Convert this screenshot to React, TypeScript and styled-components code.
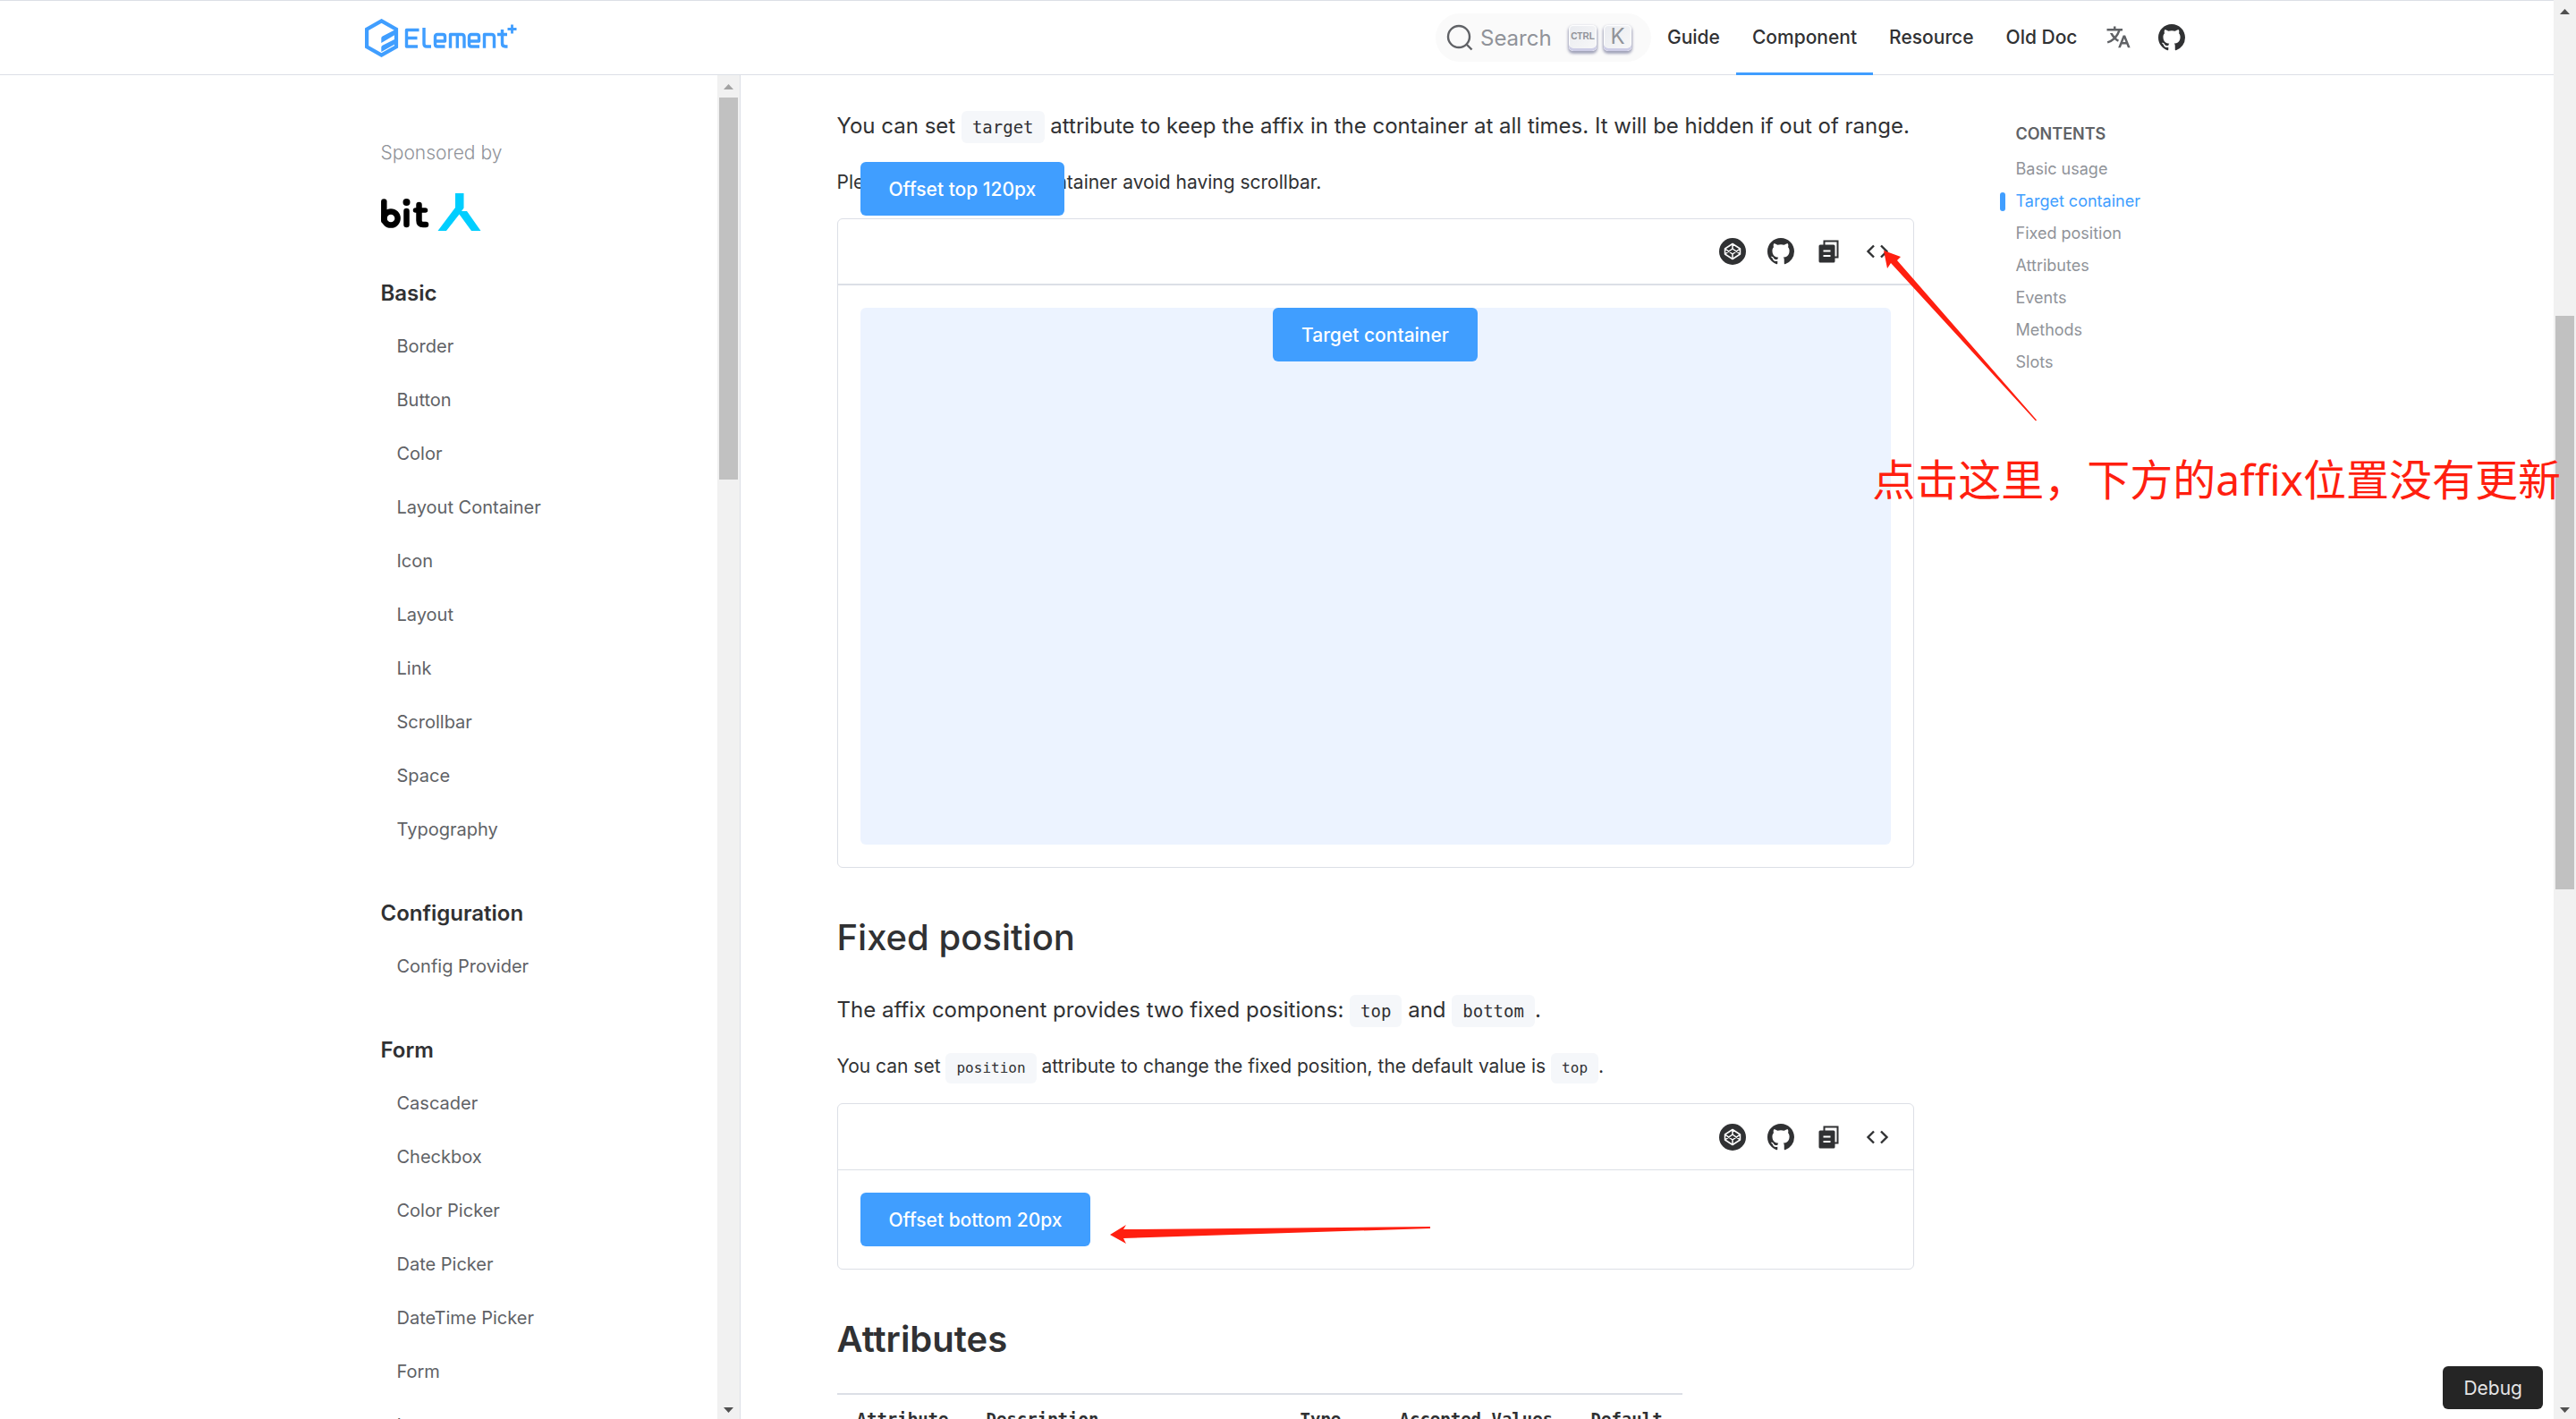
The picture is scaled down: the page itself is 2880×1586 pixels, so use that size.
import React from 'react';
import styled, { createGlobalStyle, css } from 'styled-components';

const sans = `Inter, "Noto Sans CJK SC", sans-serif`;
const mono = `"DejaVu Sans Mono", "Liberation Mono", monospace`;
const line = '#dcdfe6';
const brand = '#409eff';
const ink = '#303133';

const GlobalStyle = createGlobalStyle`
  * { box-sizing: border-box; }
  body { margin: 0; background: #fff; color: ${ink}; font-family: ${sans}; font-size: 21px; }
  a { color: inherit; text-decoration: none; }
  h2, h3, p, ul { margin: 0; padding: 0; font-weight: inherit; }
  ul { list-style: none; }
  button { font-family: inherit; border: 0; cursor: pointer; }
  svg { display: block; }
`;

const Window = styled.div`
  display: flex;
  height: 100vh;
  overflow: hidden;
  position: relative;
`;

const Page = styled.div`
  flex: 1;
  min-width: 0;
  display: flex;
  flex-direction: column;
`;

const Header = styled.header`
  flex: none;
  height: 84px;
  padding: 0 calc((100% - 2040px) / 2);
  border-top: 1px solid ${line};
  border-bottom: 1px solid ${line};
  display: flex;
  align-items: center;
  justify-content: space-between;
`;

const Nav = styled.nav`
  display: flex;
  align-items: center;
  align-self: stretch;
`;

const SearchButton = styled.button`
  height: 54px;
  width: 241px;
  padding: 0 22px 0 12px;
  border-radius: 27px;
  background: #fafafa;
  color: #909399;
  font-size: 24px;
  display: flex;
  align-items: center;
  gap: 8px;
`;

const SearchLabel = styled.span`
  flex: 1;
  text-align: left;
`;

const Key = styled.kbd<{ $small?: boolean }>`
  width: 31px;
  height: 29px;
  padding-bottom: 3px;
  border-radius: 5px;
  background: linear-gradient(-225deg, #e9ebf0, #f8f8f8);
  box-shadow: inset 0 -3px 0 0 #cdcde6, inset 0 0 1px 1px #fff, 0 2px 3px 1px rgba(30, 35, 90, 0.4);
  font-family: ${p => (p.$small ? `"Liberation Sans Narrow", "Liberation Sans", sans-serif` : sans)};
  font-size: ${p => (p.$small ? 10 : 24)}px;
  font-weight: ${p => (p.$small ? 700 : 400)};
  line-height: 26px;
  display: flex;
  align-items: center;
  justify-content: center;
`;

const NavLink = styled.a<{ $active?: boolean }>`
  align-self: stretch;
  margin-bottom: -1px;
  padding: 0 18px;
  display: flex;
  align-items: center;
  font-size: 21px;
  font-weight: 500;
  border-bottom: 3px solid ${p => (p.$active ? brand : 'transparent')};
`;

const IconGroup = styled.div`
  display: flex;
  align-items: center;
  gap: 30px;
  padding: 0 5px 0 12px;
`;

const NavIcon = styled.a`
  display: flex;
  color: ${ink};
`;

const Body = styled.div`
  flex: 1;
  min-height: 0;
  display: flex;
`;

const Sidebar = styled.aside`
  flex: none;
  width: calc((100% - 2040px) / 2 + 420px);
  border-right: 1px solid ${line};
  display: flex;
`;

const SideScroll = styled.div`
  flex: 1;
  overflow: hidden;
  padding: 69px 0 0 calc(100% - 401px);
`;

const Sponsor = styled.p`
  font-weight: 300;
  font-size: 21px;
  line-height: 36px;
  color: #909399;
`;

const SponsorLink = styled.a`
  display: flex;
  padding: 27px 0 40px;
`;

const Group = styled.section`
  margin-bottom: 35px;
`;

const GroupTitle = styled.h3`
  font-size: 24px;
  line-height: 58px;
  font-weight: 600;
`;

const SideLink = styled.a`
  display: block;
  padding-left: 18px;
  font-size: 20px;
  line-height: 60px;
  color: #606266;
`;

const Main = styled.main`
  flex: 1;
  min-width: 0;
  padding: 36px 0 0 108px;
  display: flex;
  align-items: flex-start;
  gap: 96px;
  overflow: hidden;
`;

const Article = styled.article`
  width: 1204px;
`;

const Lead = styled.p`
  font-size: 24px;
  line-height: 42px;
`;

const Note = styled.p`
  margin: 24px 0 22px;
  font-size: 21px;
  line-height: 36px;
`;

const Code = styled.code<{ $small?: boolean }>`
  display: inline-block;
  padding: 0 12px;
  border-radius: 6px;
  background: #f5f7fa;
  font-family: ${mono};
  font-size: ${p => (p.$small ? 16 : 19)}px;
  line-height: ${p => (p.$small ? 34 : 36)}px;
`;

const Title = styled.h2<{ $strong?: boolean }>`
  font-size: 40px;
  line-height: 60px;
  font-weight: ${p => (p.$strong ? 600 : 500)};
  margin: 48px 0 30px;
`;

const Card = styled.section`
  position: relative;
  border: 1px solid ${line};
  border-radius: 6px;
`;

const Toolbar = styled.div<{ $rule: number }>`
  height: 74px;
  padding: 0 25px;
  border-bottom: ${p => p.$rule}px solid ${line};
  display: flex;
  align-items: center;
  justify-content: flex-end;
  gap: 24px;
`;

const ToolButton = styled.button`
  padding: 0;
  background: none;
  color: ${ink};
`;

const Demo = styled.div`
  padding: 25px;
`;

const Stage = styled.div`
  height: 600px;
  border-radius: 6px;
  background: #ecf3ff;
  display: flex;
  justify-content: center;
  align-items: flex-start;
`;

const Primary = styled.button`
  height: 60px;
  padding: 0 32px;
  border-radius: 6px;
  background: ${brand};
  color: #fff;
  font-size: 21px;
  font-weight: 500;
`;

const Affixed = styled.div`
  position: absolute;
  left: 25px;
  top: -64px;
`;

const Table = styled.table`
  margin-top: 2px;
  border-collapse: collapse;
  border-top: 2px solid ${line};
  font-family: ${mono};
`;

const Th = styled.th<{ $w: number }>`
  width: ${p => p.$w}px;
  padding: 12px 0 12px 22px;
  text-align: left;
  font-size: 19px;
  line-height: 30px;
  white-space: nowrap;
`;

const Toc = styled.nav`
  padding-top: 12px;
`;

const TocTitle = styled.h3`
  padding-left: 18px;
  font-size: 18px;
  line-height: 36px;
  font-weight: 600;
  color: #606266;
  margin-bottom: 3px;
`;

const TocLink = styled.a<{ $active?: boolean }>`
  display: flex;
  align-items: center;
  gap: 12px;
  font-size: 18px;
  line-height: 36px;
  color: #909399;
  &::before {
    content: '';
    width: 6px;
    height: 21px;
    border-radius: 3px;
  }
  ${p => p.$active && css`
    color: ${brand};
    &::before { background: ${brand}; }
  `}
`;

const Track = styled.div`
  flex: none;
  width: 25px;
  background: #f1f1f1;
  display: flex;
  flex-direction: column;
  align-items: center;
  justify-content: space-between;
  padding: 10px 0 7px;
`;

const ThumbLane = styled.div`
  flex: 1;
  padding: 9px 0;
`;

const Thumb = styled.div<{ $from: number; $size: number }>`
  width: 21px;
  margin-top: ${p => p.$from}px;
  height: ${p => p.$size}px;
  background: #c1c1c1;
`;

const Debug = styled.button`
  position: absolute;
  right: 37px;
  bottom: 11px;
  height: 48px;
  padding: 0 23px;
  border-radius: 6px;
  background: #252525;
  color: #e5e5e5;
  font-size: 21px;
`;

const Markup = styled.svg<{ $left: number; $top: number }>`
  position: absolute;
  left: ${p => p.$left}px;
  top: ${p => p.$top}px;
  pointer-events: none;
`;

const Callout = styled.p`
  position: absolute;
  right: 17px;
  top: 500px;
  color: #ff1f10;
  font-family: "Noto Sans", "Noto Sans CJK SC", sans-serif;
  font-size: 48px;
  line-height: 72px;
  white-space: nowrap;
`;

const Arrow = ({ up, color }: { up?: boolean; color: string }) => (
  <svg width="11" height="6" viewBox="0 0 11 6"><path fill={color} d={up ? 'M0 6 5.500 0 11 6z' : 'M0 0h11L5.500 6z'} /></svg>
);

const Scrollbar = ({ from, size, idle }: { from: number; size: number; idle?: boolean }) => (
  <Track>
    <Arrow up color={idle ? '#a3a3a3' : '#505050'} />
    <ThumbLane><Thumb $from={from} $size={size} /></ThumbLane>
    <Arrow color="#505050" />
  </Track>
);

const Logo = () => (
  <svg width="171" height="43" viewBox="1 0 171 43" fill="none" stroke={brand}>
    <path strokeWidth="4.200" d="M19.500 2.400 36 11.800v19.400l-16.500 9.400L3.100 31.200V11.800z" />
    <path fill={brand} stroke="none" d="M37 11v5.500L19.300 27v-5.200c0-1 .5-1.800 1.300-2.300zM37 21.500V27L19.300 37v-5c0-1 .5-1.800 1.300-2.300z" />
    <g strokeWidth="3.400" strokeLinejoin="round">
      <path d="M61.500 12.500H47.500V31H60M47.500 21.500H59.500" />
      <path d="M67 10v18q0 3 3 3h5" />
      <path d="M90.500 31H82q-2.500 0-2.500-2.500V20q0-2.500 2.500-2.500h6q2.500 0 2.500 2.500v5H80" />
      <path d="M96.500 32.700V17.500H109q3 0 3 3v12.200M104.300 17.500v15.200" />
      <path d="M129 31h-9q-2.500 0-2.500-2.500V20q0-2.500 2.500-2.500h6q2.500 0 2.500 2.500v5H118" />
      <path d="M134.500 32.700V17.500h8q3 0 3 3v12.200" />
      <path d="M154.500 12v15.500q0 3.500 3.500 3.500h2.500M149 17.500h11" />
      <path strokeWidth="2.800" d="M165.500 6.500v10M160.500 11.500h10" />
    </g>
  </svg>
);

const BitLogo = () => (
  <svg width="112" height="43" viewBox="0 0 112 43" fill="none" stroke="#000" strokeWidth="6.500" strokeLinecap="round">
    <path d="M3.300 9.500v21" />
    <circle cx="11" cy="28" r="7.600" />
    <path d="M28.500 20v15" />
    <circle cx="28.500" cy="10" r="4" fill="#000" stroke="none" />
    <path d="M42.500 13v17.500q0 4.500 4.500 4.500h3" />
    <path strokeWidth="5.500" d="M38.500 19h11" />
    <path fill="#00ceff" stroke="none" d="M83 0h9.500v16.500L90 20h6l15.500 22H101L87.500 23.500 73 42H63.500L83 16z" />
  </svg>
);

const GithubIcon = ({ size = 30 }: { size?: number }) => (
  <svg width={size} height={size} viewBox="0 0 24 24" fill={ink}>
    <path d="M12 0C5.370 0 0 5.370 0 12c0 5.300 3.440 9.800 8.200 11.390.6.110.82-.26.82-.58v-2.230c-3.340.73-4.030-1.420-4.030-1.420-.55-1.390-1.340-1.760-1.340-1.760-1.090-.74.080-.73.080-.73 1.210.080 1.840 1.240 1.840 1.240 1.070 1.840 2.810 1.300 3.500 1 .1-.780.420-1.310.760-1.610-2.670-.3-5.470-1.330-5.470-5.930 0-1.310.470-2.380 1.240-3.220-.130-.3-.540-1.520.11-3.180 0 0 1.010-.320 3.300 1.230a11.500 11.500 0 0 1 6 0c2.290-1.550 3.300-1.230 3.300-1.230.65 1.660.240 2.880.120 3.180.770.840 1.230 1.910 1.230 3.220 0 4.610-2.800 5.630-5.480 5.920.430.370.820 1.100.820 2.220v3.290c0 .320.220.700.830.580A12 12 0 0 0 24 12c0-6.630-5.370-12-12-12z" />
  </svg>
);

const TranslateIcon = () => (
  <svg width="30" height="30" viewBox="0 0 24 24" fill="#606266">
    <path d="m18.500 10 4.400 11h-2.155l-1.201-3h-4.090l-1.199 3h-2.154L16.500 10h2zM10 2v2h6v2h-1.968a18.222 18.222 0 0 1-3.620 6.301 14.864 14.864 0 0 0 2.336 1.707l-.751 1.878A17.015 17.015 0 0 1 9 13.725a16.676 16.676 0 0 1-6.201 3.548l-.536-1.929a14.700 14.700 0 0 0 5.327-3.042A18.078 18.078 0 0 1 4.767 8h2.240A16.032 16.032 0 0 0 9 10.877a16.165 16.165 0 0 0 2.910-4.876L2 6V4h6V2h2zm7.500 10.885L16.253 16h2.492L17.500 12.885z" />
  </svg>
);

const SearchIcon = () => (
  <svg width="30" height="30" viewBox="0 0 30 30" fill="none" stroke="#606266" strokeWidth="2.400">
    <circle cx="14" cy="14" r="12" /><path d="m22.500 22.500 6 6" />
  </svg>
);

const SandboxIcon = () => (
  <svg width="30" height="30" viewBox="0 0 30 30" fill="none" stroke="#fff" strokeWidth="1.500" strokeLinejoin="round">
    <circle cx="15" cy="15" r="15" fill={ink} stroke="none" />
    <path d="M15 6.500 23.500 12v6L15 23.500 6.500 18v-6zM15 6.500V12M15 18v5.500M6.500 12l8.500 6 8.500-6M6.500 18l8.500-6 8.500 6" />
  </svg>
);

const CopyIcon = () => (
  <svg width="30" height="30" viewBox="0 0 30 30">
    <path fill="none" stroke={ink} strokeWidth="2" d="M9.500 8V3.500h15v18H20" />
    <rect x="3.500" y="7.500" width="18" height="20" rx="1.500" fill={ink} />
    <path fill="none" stroke="#fff" strokeWidth="2" d="M8.500 14.500h8M8.500 20h8" />
  </svg>
);

const CodeIcon = () => (
  <svg width="30" height="30" viewBox="0 0 30 30" fill="none" stroke={ink} strokeWidth="2.400">
    <path d="m11 8.500-6.500 6.500 6.500 6.500M19 8.500l6.500 6.500-6.500 6.500" />
  </svg>
);

const Tools = ({ rule }: { rule: number }) => (
  <Toolbar $rule={rule}>
    <ToolButton aria-label="Edit in playground"><SandboxIcon /></ToolButton>
    <ToolButton aria-label="Edit on GitHub"><GithubIcon /></ToolButton>
    <ToolButton aria-label="Copy code"><CopyIcon /></ToolButton>
    <ToolButton aria-label="View source"><CodeIcon /></ToolButton>
  </Toolbar>
);

const groups = [
  { title: 'Basic', items: ['Border', 'Button', 'Color', 'Layout Container', 'Icon', 'Layout', 'Link', 'Scrollbar', 'Space', 'Typography'] },
  { title: 'Configuration', items: ['Config Provider'] },
  { title: 'Form', items: ['Cascader', 'Checkbox', 'Color Picker', 'Date Picker', 'DateTime Picker', 'Form', 'Input'] },
];

const contents = ['Basic usage', 'Target container', 'Fixed position', 'Attributes', 'Events', 'Methods', 'Slots'];

const columns = [
  { name: 'Attribute', width: 145 },
  { name: 'Description', width: 351 },
  { name: 'Type', width: 111 },
  { name: 'Accepted Values', width: 214 },
  { name: 'Default', width: 124 },
];

export default function App() {
  return (
    <Window>
      <GlobalStyle />
      <Page>
        <Header>
          <a href="#home" aria-label="Element Plus"><Logo /></a>
          <Nav>
            <SearchButton>
              <SearchIcon />
              <SearchLabel>Search</SearchLabel>
              <Key $small>CTRL</Key>
              <Key>K</Key>
            </SearchButton>
            <NavLink href="#guide">Guide</NavLink>
            <NavLink href="#component" $active>Component</NavLink>
            <NavLink href="#resource">Resource</NavLink>
            <NavLink href="#old">Old Doc</NavLink>
            <IconGroup>
              <NavIcon href="#lang" aria-label="Language"><TranslateIcon /></NavIcon>
              <NavIcon href="#github" aria-label="GitHub"><GithubIcon /></NavIcon>
            </IconGroup>
          </Nav>
        </Header>
        <Body>
          <Sidebar>
            <SideScroll>
              <Sponsor>Sponsored by</Sponsor>
              <SponsorLink href="#bit" aria-label="bit"><BitLogo /></SponsorLink>
              {groups.map(g => (
                <Group key={g.title}>
                  <GroupTitle>{g.title}</GroupTitle>
                  <ul>{g.items.map(i => <li key={i}><SideLink href={`#${i}`}>{i}</SideLink></li>)}</ul>
                </Group>
              ))}
            </SideScroll>
            <Scrollbar from={0} size={427} idle />
          </Sidebar>
          <Main>
            <Article>
              <Lead>You can set <Code>target</Code> attribute to keep the affix in the container at all times. It will be hidden if out of range.</Lead>
              <Note>Please notice that the container avoid having scrollbar.</Note>
              <Card>
                <Affixed><Primary>Offset top 120px</Primary></Affixed>
                <Tools rule={2} />
                <Demo><Stage><Primary>Target container</Primary></Stage></Demo>
              </Card>
              <Title>Fixed position</Title>
              <Lead>The affix component provides two fixed positions: <Code>top</Code> and <Code>bottom</Code>.</Lead>
              <Note>You can set <Code $small>position</Code> attribute to change the fixed position, the default value is <Code $small>top</Code>.</Note>
              <Card>
                <Tools rule={1} />
                <Demo><Primary>Offset bottom 20px</Primary></Demo>
              </Card>
              <Title $strong>Attributes</Title>
              <Table>
                <thead><tr>{columns.map(c => <Th key={c.name} $w={c.width}>{c.name}</Th>)}</tr></thead>
              </Table>
            </Article>
            <Toc>
              <TocTitle>CONTENTS</TocTitle>
              <ul>{contents.map(c => <li key={c}><TocLink href={`#${c}`} $active={c === 'Target container'}>{c}</TocLink></li>)}</ul>
            </Toc>
          </Main>
        </Body>
      </Page>
      <Scrollbar from={328} size={641} />
      <Markup $left={2106} $top={280} width="174" height="192" fill="#ff1f10">
        <path d="M0 0 19 7 15 11 171 189.500 170 190.500 8 14 4 20z" />
      </Markup>
      <Markup $left={1241} $top={1368} width="360" height="24" fill="#ff1f10">
        <path d="M0 12 18 1 15 6 358 3v2L15 16l3 6z" />
      </Markup>
      <Callout>点击这里，下方的affix位置没有更新</Callout>
      <Debug>Debug</Debug>
    </Window>
  );
}
